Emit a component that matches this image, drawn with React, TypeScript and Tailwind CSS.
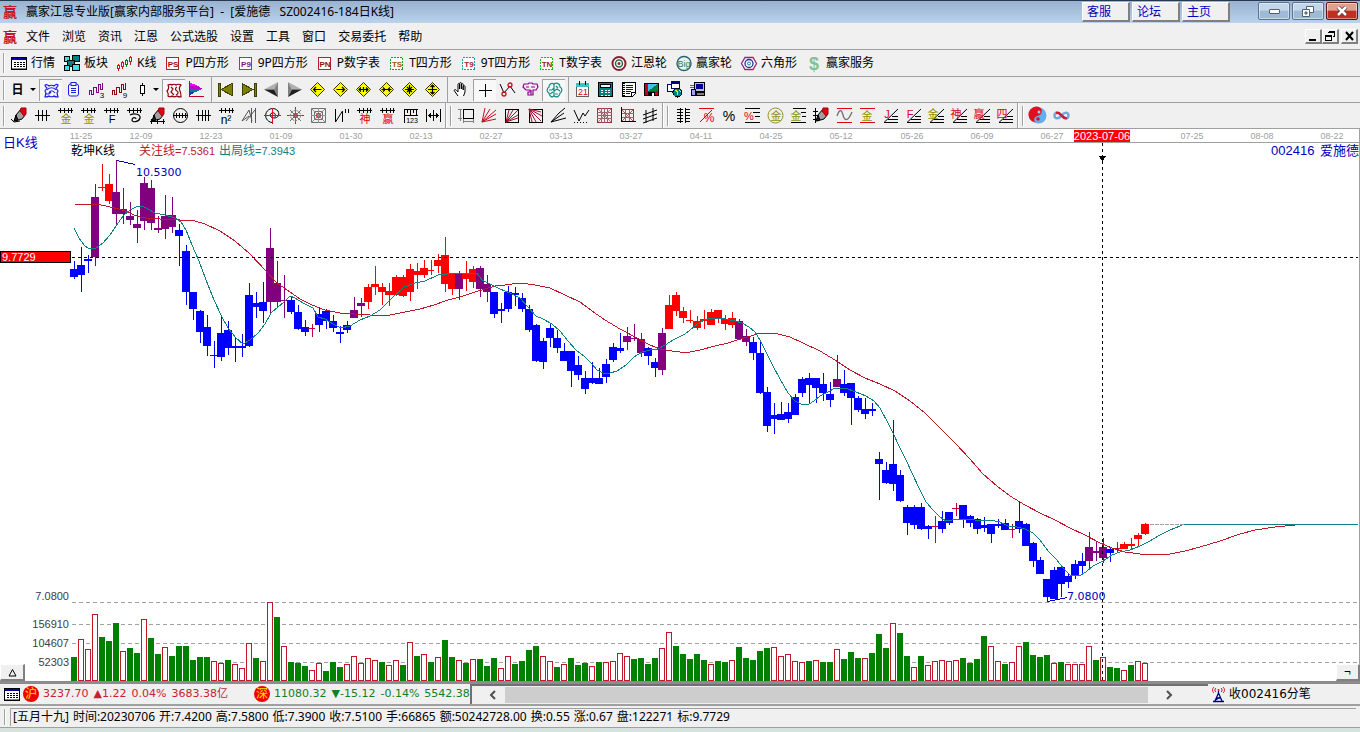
import type { ReactNode } from "react";
import clsx from "clsx";

type Candle = [color: string, high: number, top: number, bottom: number, low: number];

const candles: Candle[] = [
  ["b", 261, 269, 277, 279], ["b", 247, 265, 275, 292], ["b", 255, 259, 261, 273], ["p", 184, 197, 257, 266],
  ["r", 164, 187, 188, 191], ["r", 174, 184, 201, 204], ["p", 160, 192, 214, 224], ["p", 188, 209, 214, 224],
  ["p", 202, 216, 220, 225], ["p", 210, 224, 228, 243], ["p", 177, 183, 221, 230], ["p", 180, 188, 223, 230],
  ["p", 216, 228, 230, 233], ["p", 195, 216, 229, 239], ["p", 197, 215, 227, 233], ["b", 224, 230, 236, 266],
  ["b", 245, 251, 292, 305], ["b", 292, 292, 309, 320], ["b", 310, 311, 332, 343], ["b", 315, 327, 346, 356],
  ["b", 341, 355, 356, 368], ["b", 315, 333, 357, 361], ["b", 321, 330, 348, 355], ["b", 337, 346, 348, 362],
  ["b", 334, 346, 348, 357], ["b", 283, 295, 346, 347], ["b", 292, 303, 307, 318], ["b", 282, 302, 311, 323],
  ["p", 228, 248, 302, 314], ["p", 261, 283, 302, 307], ["p", 275, 300, 301, 318], ["b", 296, 300, 312, 314],
  ["b", 305, 312, 329, 330], ["b", 320, 327, 332, 336], ["c", 324, 328, 329, 337], ["b", 307, 314, 325, 332],
  ["b", 309, 311, 321, 329], ["b", 315, 321, 328, 332], ["b", 326, 332, 334, 343], ["b", 321, 325, 330, 333],
  ["p", 297, 310, 318, 318], ["p", 298, 303, 306, 317], ["r", 284, 287, 302, 309], ["r", 266, 284, 287, 295],
  ["r", 283, 287, 292, 305], ["r", 283, 291, 295, 306], ["r", 275, 277, 295, 296], ["r", 275, 277, 296, 297],
  ["r", 264, 269, 292, 301], ["r", 263, 271, 275, 289], ["r", 260, 268, 275, 278], ["r", 260, 270, 271, 275],
  ["r", 254, 260, 266, 273], ["r", 237, 255, 284, 292], ["r", 273, 273, 289, 295], ["p", 271, 273, 289, 300],
  ["r", 261, 274, 279, 291], ["r", 266, 269, 282, 288], ["p", 266, 268, 289, 297], ["p", 275, 284, 292, 302],
  ["b", 292, 292, 314, 318], ["b", 303, 309, 311, 323], ["b", 286, 292, 309, 312], ["b", 287, 293, 295, 306],
  ["b", 293, 298, 309, 312], ["b", 305, 309, 330, 332], ["b", 324, 325, 361, 362], ["b", 338, 341, 362, 369],
  ["b", 324, 328, 338, 347], ["b", 330, 338, 348, 353], ["b", 343, 351, 361, 361], ["b", 351, 351, 371, 387],
  ["b", 356, 365, 375, 380], ["b", 371, 378, 389, 394], ["b", 362, 378, 383, 384], ["b", 368, 378, 384, 384],
  ["b", 359, 364, 377, 383], ["b", 343, 347, 360, 362], ["b", 333, 348, 351, 353], ["p", 327, 336, 342, 350],
  ["p", 324, 338, 339, 341], ["p", 333, 339, 353, 357], ["b", 347, 348, 356, 365], ["b", 358, 362, 368, 377],
  ["p", 328, 333, 370, 375], ["r", 295, 305, 329, 329], ["r", 292, 295, 311, 316], ["r", 307, 311, 318, 323],
  ["r", 310, 320, 321, 323], ["r", 316, 321, 328, 330], ["r", 310, 319, 321, 329], ["r", 309, 312, 325, 325],
  ["r", 310, 310, 318, 323], ["r", 315, 319, 324, 330], ["r", 312, 318, 325, 328], ["p", 319, 321, 339, 340],
  ["p", 329, 336, 342, 346], ["b", 337, 342, 353, 360], ["b", 342, 353, 393, 394], ["b", 387, 392, 426, 432],
  ["b", 403, 415, 419, 434], ["b", 402, 414, 420, 420], ["b", 403, 412, 419, 423], ["b", 394, 397, 415, 415],
  ["b", 377, 379, 393, 397], ["b", 373, 378, 385, 404], ["b", 378, 378, 388, 403], ["b", 373, 384, 393, 401],
  ["b", 382, 394, 400, 407], ["p", 355, 379, 387, 387], ["b", 370, 384, 393, 396], ["b", 383, 383, 398, 425],
  ["b", 396, 398, 410, 412], ["b", 398, 409, 414, 419], ["b", 403, 409, 411, 416], ["b", 452, 459, 464, 500],
  ["b", 462, 470, 483, 484], ["b", 420, 464, 484, 491], ["b", 470, 475, 501, 502], ["b", 505, 507, 523, 535],
  ["b", 505, 507, 525, 529], ["b", 503, 507, 529, 530], ["b", 525, 526, 529, 539], ["c", 516, 526, 527, 543],
  ["b", 511, 521, 529, 533], ["b", 512, 512, 523, 525], ["c", 503, 508, 509, 516], ["b", 505, 505, 519, 528],
  ["b", 515, 516, 523, 527], ["b", 518, 519, 529, 534], ["b", 517, 525, 528, 532], ["b", 524, 524, 534, 543],
  ["b", 519, 524, 526, 528], ["b", 519, 523, 530, 530], ["c", 524, 529, 530, 538], ["b", 502, 521, 529, 533],
  ["b", 523, 524, 546, 546], ["b", 542, 543, 561, 567], ["b", 557, 560, 574, 574], ["b", 579, 579, 597, 602],
  ["b", 567, 570, 599, 599], ["b", 566, 567, 584, 597], ["b", 574, 576, 582, 588], ["b", 560, 564, 576, 579],
  ["b", 553, 561, 566, 574], ["p", 532, 547, 561, 569], ["p", 542, 551, 553, 561], ["p", 538, 547, 558, 563],
  ["b", 548, 549, 553, 562], ["c", 542, 548, 549, 553], ["r", 542, 544, 549, 549], ["r", 538, 544, 546, 549],
  ["r", 533, 535, 539, 547], ["r", 523, 524, 534, 535],
];

const candleFill: Record<string, string> = { b: "#0000ff", r: "#ff0000", p: "#800080", c: "#c00040" };

const volumes =
  "g657 r639 r649 r614 g637 g641 g623 r651 g648 g653 r619 g638 g654 r647 g656 g646 g646 g660 g657 g657 r661 r663 g660 r664 r668 r643 g658 r661 r602 g617 r646 g662 g663 g666 r670 r663 g671 g662 g667 r664 r656 r663 r658 r660 g662 r665 r660 g665 r642 g656 r654 g662 r657 g640 g657 r660 g663 r659 g659 g666 g658 r668 r656 g664 g661 g650 g646 r656 r661 g667 r664 g658 g665 g663 r666 g662 r662 r661 r653 r656 g659 g658 g664 g658 r648 r632 g646 g654 g659 g654 g660 r664 g661 g662 r660 g647 g658 g660 g651 g648 r647 r656 r654 r661 r662 g661 r660 g662 g662 r649 g659 g652 g658 r658 g653 g634 g648 r623 g633 g656 r667 g656 r665 r661 r660 r661 r660 g658 g663 g659 g636 r646 r661 g664 r662 r646 g642 g655 g657 g655 r663 g662 r664 r664 r664 r646 g660 r657 g667 g668 r670 g665 r661 r663".split(" ");

const slowLine =
  "75,205 78,204 97,204 110,207 119,209 128,212 134,215 140,217 146,218 160,219 180,220 195,221 205,224 220,231 235,241 250,254 266,271 277,283 290,292 300,299 312,305 325,310 340,313 355,314 370,315 390,315 405,312 420,309 434,305 448,300 460,297 475,292 485,289 495,286 505,285 520,283 535,285 550,288 565,295 580,302 592,311 605,320 620,329 635,337 650,345 660,349 672,351 680,352 690,352 700,350 715,346 728,343 737,340 748,337 757,334 767,333 778,334 790,337 803,343 820,351 835,360 850,370 865,378 880,384 895,391 910,401 925,413 940,428 955,443 970,459 983,474 997,486 1010,496 1025,505 1040,513 1055,520 1070,528 1085,535 1100,543 1112,548 1125,552 1140,554 1155,555 1170,554 1185,551 1200,547 1220,541 1240,534 1255,530 1275,527 1295,525 1310,524 1358,524";

const fastLine =
  "74,228 79,238 84,245 89,249 96,248 103,243 110,235 116,226 123,216 130,210 136,207 142,206 148,209 155,213 165,215 175,218 181,222 186,230 192,245 199,261 206,280 214,300 222,317 228,328 236,338 243,344 250,340 258,333 265,324 271,313 278,307 284,302 290,296 295,298 303,303 313,308 318,317 325,319 333,324 341,328 350,326 360,320 370,316 380,310 392,298 404,287 415,283 425,281 438,275 447,274 453,273 477,273 482,280 490,284 500,289 510,293 520,298 528,307 536,316 543,319 552,324 560,331 568,341 576,350 585,357 592,364 597,370 603,373 610,373 617,371 626,365 634,357 642,352 650,350 658,349 665,345 675,339 685,334 695,326 704,320 712,318 725,319 735,321 742,323 749,327 755,332 760,340 766,352 773,366 780,379 788,393 795,401 803,405 809,404 814,401 820,396 828,392 835,388 845,388 856,392 866,396 874,401 880,408 888,423 893,433 900,448 906,460 912,473 920,490 926,502 933,510 940,517 946,521 952,520 960,519 975,520 990,520 1000,522 1008,526 1017,527 1025,529 1033,533 1040,540 1048,551 1056,559 1064,569 1070,575 1079,576 1086,572 1093,566 1103,561 1112,555 1120,552 1130,550 1140,546 1150,541 1160,535 1170,530 1180,526 1184,524 1358,524";

const dates: [number, string][] = [
  [81, "11-25"], [141, "12-09"], [211, "12-23"], [281, "01-09"], [351, "01-30"], [421, "02-13"],
  [491, "02-27"], [561, "03-13"], [631, "03-27"], [701, "04-11"], [771, "04-25"], [841, "05-12"],
  [912, "05-26"], [982, "06-09"], [1052, "06-27"], [1192, "07-25"], [1262, "08-08"], [1332, "08-22"],
];

const menus = ["文件", "浏览", "资讯", "江恩", "公式选股", "设置", "工具", "窗口", "交易委托", "帮助"];

const quote = [
  "[五月十九]", "时间:20230706", "开:7.4200", "高:7.5800", "低:7.3900", "收:7.5100",
  "手:66865", "额:50242728.00", "换:0.55", "涨:0.67", "盘:122271", "标:9.7729",
];

/* ---------- icons ---------- */

function Ico({ children, smooth }: { children: ReactNode; smooth?: boolean }) {
  return (
    <svg
      viewBox="0 0 17 17"
      className="w-[17px] h-[17px] shrink-0 overflow-visible"
      fill="none"
      stroke="#000"
      shapeRendering={smooth ? "auto" : "crispEdges"}
      aria-hidden="true"
    >
      {children}
    </svg>
  );
}

function Glyph({ x, y, size, color, children, bold }: { x: number; y: number; size: number; color: string; children: string; bold?: boolean }) {
  return (
    <text
      x={x}
      y={y}
      fontSize={size}
      fill={color}
      stroke="none"
      textAnchor="middle"
      fontWeight={bold ? 700 : 400}
      fontFamily="'Liberation Sans','Noto Sans CJK SC',sans-serif"
    >
      {children}
    </text>
  );
}

function TableIcon() {
  return (
    <Ico>
      <rect x="0.5" y="2.5" width="15" height="12" fill="#fff" />
      <rect x="1" y="3" width="14" height="2" fill="#0000a0" stroke="none" />
      <path d="M3 7.5h2M6 7.5h2M9 7.5h2M12 7.5h2M3 9.5h2M6 9.5h2M9 9.5h2M12 9.5h2M3 11.5h2M6 11.5h2M9 11.5h2M12 11.5h2" />
      <path d="M1 13.5h14" stroke="#888" />
    </Ico>
  );
}

function BlocksIcon() {
  return (
    <Ico>
      <rect x="0.5" y="1.5" width="5" height="5" fill="#40e0e0" />
      <rect x="8.5" y="0.5" width="7" height="6" fill="#008080" />
      <rect x="3.5" y="5.5" width="7" height="6" fill="#008080" />
      <rect x="0.5" y="10.5" width="5" height="5" fill="#40e0e0" />
      <rect x="8.5" y="9.5" width="7" height="6" fill="#40e0e0" />
    </Ico>
  );
}

function CandlesIcon() {
  return (
    <Ico>
      <path d="M1.5 9v7M5.5 6v8" stroke="#d01818" />
      <path d="M9.5 4v8" stroke="#008000" />
      <path d="M13.5 1v9" stroke="#d01818" />
      <rect x="0.5" y="10.5" width="2" height="3" fill="#fff" stroke="#d01818" />
      <rect x="4.5" y="7.5" width="2" height="4" fill="#fff" stroke="#d01818" />
      <rect x="8.5" y="5.5" width="2" height="4" fill="#fff" stroke="#008000" />
      <rect x="12.5" y="2.5" width="2" height="4" fill="#fff" stroke="#d01818" />
    </Ico>
  );
}

function TagIcon({ label, frame, ink }: { label: string; frame: string; ink: string }) {
  return (
    <Ico>
      <rect x="1.5" y="2.5" width="12" height="12" fill="#fff" stroke={frame} strokeDasharray={frame === "#b02030" || frame === "#b020c0" ? undefined : "2 1"} />
      <Glyph x={8} y={12} size={8} color={ink} bold>{label}</Glyph>
    </Ico>
  );
}

function WheelIcon() {
  return (
    <Ico smooth>
      <circle cx="8" cy="8.500" r="6.500" stroke="#8c2030" strokeWidth="2" fill="#fff" />
      <circle cx="8" cy="8.500" r="3.500" stroke="#207050" strokeWidth="1.500" />
      <circle cx="8" cy="8.500" r="1.500" fill="#b02030" stroke="none" />
    </Ico>
  );
}

function BigIcon() {
  return (
    <Ico smooth>
      <circle cx="8" cy="8.500" r="7" stroke="#306080" strokeWidth="1.400" fill="#e8f4ee" />
      <Glyph x={8} y={12} size={9} color="#208050">Big</Glyph>
    </Ico>
  );
}

function HexIcon() {
  return (
    <Ico smooth>
      <path d="M4 2.500h8l3.500 6-3.500 6H4L.5 8.500z" stroke="#a02070" strokeWidth="1.300" fill="#fff" />
      <circle cx="8" cy="8.500" r="4" stroke="#2030a0" strokeWidth="1.300" />
      <circle cx="8" cy="8.500" r="1.500" stroke="#208080" />
    </Ico>
  );
}

function DollarIcon() {
  return (
    <Ico smooth>
      <Glyph x={8} y={15} size={18} color="#88c088" bold>$</Glyph>
    </Ico>
  );
}

const quickLinks: { label: string; icon: ReactNode }[] = [
  { label: "行情", icon: <TableIcon /> },
  { label: "板块", icon: <BlocksIcon /> },
  { label: "K线", icon: <CandlesIcon /> },
  { label: "P四方形", icon: <TagIcon label="PS" frame="#b02030" ink="#901020" /> },
  { label: "9P四方形", icon: <TagIcon label="P9" frame="#b020c0" ink="#801090" /> },
  { label: "P数字表", icon: <TagIcon label="PN" frame="#b02030" ink="#901020" /> },
  { label: "T四方形", icon: <TagIcon label="TS" frame="#10a020" ink="#a05010" /> },
  { label: "9T四方形", icon: <TagIcon label="T9" frame="#10a0a0" ink="#a02040" /> },
  { label: "T数字表", icon: <TagIcon label="TN" frame="#10c010" ink="#a02010" /> },
  { label: "江恩轮", icon: <WheelIcon /> },
  { label: "赢家轮", icon: <BigIcon /> },
  { label: "六角形", icon: <HexIcon /> },
  { label: "赢家服务", icon: <DollarIcon /> },
];

function Diamond({ d }: { d: string }) {
  return (
    <Ico smooth>
      <path d="M8.500 1.500l7 7-7 7-7-7z" fill="#ffff00" stroke="#303000" strokeWidth="1" />
      <path d={d} strokeWidth="1.200" />
    </Ico>
  );
}

function Wave({ color, n }: { color: string; n: string }) {
  return (
    <Ico>
      <path d="M1.500 14V9.500h2V13.500h2V6.500h3v5h2V3.500h2v5h2V1.500" stroke={color} />
      <Glyph x={14} y={17} size={8} color="#000">{n}</Glyph>
    </Ico>
  );
}

const viewIcons: { name: string; on?: boolean; icon: ReactNode }[] = [
  {
    name: "形态",
    on: true,
    icon: (
      <Ico smooth>
        <path d="M2 3c2-1 3 0 4 1 1-1 4-1 5 0 1-1 3-2 4-1 0 2-1 2-2 3l2 3-1 2 1 4c-2 0-3 0-4-1-1 1-4 1-5 0-1 1-3 1-4 1l1-4-1-2 2-3c-1-1-2-1-2-3z" stroke="#2020e0" strokeWidth="1.200" />
        <path d="M4 8c2-3 7-3 9 0M6 11c1-3 4-3 6 0M2 12h4l2-2" stroke="#2020e0" strokeWidth="1.200" />
      </Ico>
    ),
  },
  {
    name: "列表",
    icon: (
      <Ico smooth>
        <rect x="3.500" y="3" width="10" height="12" rx="2" stroke="#2020e0" />
        <rect x="6" y="1.500" width="5" height="3" fill="#f0f0f0" stroke="#2020e0" />
        <path d="M6 7.500h5M6 9.500h5M6 11.500h5" stroke="#2020e0" />
      </Ico>
    ),
  },
  { name: "3日线", icon: <Wave color="#800080" n="3" /> },
  { name: "9日线", icon: <Wave color="#900010" n="9" /> },
];

const shapeIcons: { name: string; on?: boolean; icon: ReactNode }[] = [
  {
    name: "乾坤",
    on: true,
    icon: (
      <Ico smooth>
        <path d="M2 3c2-1 3-1 4 0 1-1 3-1 4 0 1-1 4-1 5 0-2 2-2 4-1 6s1 4 1 6c-2 0-3 0-4-1-2 1-4 1-5 0-1 1-3 1-4 0 1-2 0-3-1-5 2-2 2-4 1-6z" stroke="#900010" strokeWidth="1.200" />
        <path d="M5 5l2 2-2 3 3 3M11 5c-2 1-2 3 0 4s1 3-1 4" stroke="#900010" strokeWidth="1.200" />
      </Ico>
    ),
  },
  {
    name: "筹码",
    icon: (
      <Ico>
        <path d="M1 1l9 4H1z" fill="#ff00ff" stroke="none" />
        <path d="M1 5h9l5 3H1z" fill="#c000d0" stroke="none" />
        <path d="M1 8h13l-6 3H1z" fill="#008080" stroke="none" />
        <path d="M1 11h6l-6 4z" fill="#0040c0" stroke="none" />
        <path d="M1.500 0v15.500H16" stroke="#c00020" />
      </Ico>
    ),
  },
];

const moveIcons: { name: string; icon: ReactNode }[] = [
  { name: "首个", icon: <Ico><path d="M1 2h2v13H1z" fill="#808000" stroke="#404000" /><path d="M15 2.500v12l-11-6z" fill="#808000" stroke="#404000" /></Ico> },
  { name: "末个", icon: <Ico><path d="M14 2h2v13h-2z" fill="#808000" stroke="#404000" /><path d="M2 2.500v12l11-6z" fill="#808000" stroke="#404000" /></Ico> },
  { name: "前一", icon: <Ico smooth><path d="M1 8.500L15 1l-4 7.500z" fill="#b0b0b0" stroke="none" /><path d="M15 1v15l-4-7.500z" fill="#808080" stroke="none" /><path d="M1 8.500h10l4 7.500z" fill="#202020" stroke="none" /></Ico> },
  { name: "后一", icon: <Ico smooth><path d="M16 8.500L2 1l4 7.500z" fill="#b0b0b0" stroke="none" /><path d="M2 1v15l4-7.500z" fill="#808080" stroke="none" /><path d="M16 8.500H6L2 16z" fill="#202020" stroke="none" /></Ico> },
  { name: "左移", icon: <Diamond d="M4.500 8.500h8M7 6L4.500 8.500 7 11" /> },
  { name: "右移", icon: <Diamond d="M4.500 8.500h8M10 6l2.500 2.500L10 11" /> },
  { name: "横放", icon: <Diamond d="M4 8.500h9M6 6.500l-2 2 2 2M11 6.500l2 2-2 2M8.500 6v5" /> },
  { name: "横缩", icon: <Diamond d="M3.500 8.500h10M5 6.500l2 2-2 2M12 6.500l-2 2 2 2" /> },
  { name: "纵缩", icon: <Diamond d="M4 8.500h9M8.500 4v9M6 6l5 5M11 6l-5 5" /> },
  { name: "纵放", icon: <Diamond d="M4 8.500h9M8.500 4v9M6.500 6l2-2 2 2M6.500 11l2 2 2-2" /> },
];

const cursorIcons: { name: string; on?: boolean; icon: ReactNode }[] = [
  { name: "拖动", icon: <Ico smooth><path d="M5 15l-3.500-5c-.8-1.500 1-2 2-.5L5 11V3.500c0-1.300 1.600-1.300 1.600 0V8 2.500c0-1.300 1.800-1.300 1.800 0V8 3.500c0-1.300 1.800-1.300 1.800 0V9 5.500c0-1.200 1.800-1.200 1.800 0V11l-1.500 4" fill="#fff" /></Ico> },
  { name: "十字线", on: true, icon: <Ico><path d="M8.500 2v13M2 8.500h13" /></Ico> },
  {
    name: "标记",
    icon: (
      <Ico smooth>
        <path d="M1 3l4 9 6-7 5 7" />
        <circle cx="11" cy="4" r="2" stroke="#d01020" strokeWidth="1.300" />
        <circle cx="5" cy="13" r="2" stroke="#d01020" strokeWidth="1.300" />
      </Ico>
    ),
  },
  { name: "树形", icon: <Ico smooth><path d="M2 3h4l1-1h3l1 1h4l1 3-2 3h-3v5H6v-3h2V9H4L1 6z" stroke="#900090" strokeWidth="1.200" /><path d="M4 6h3M9 6h4M9 9v5" stroke="#900090" strokeWidth="1.200" /></Ico> },
  { name: "智能", on: true, icon: <Ico smooth><path d="M8 2C5 0 3 3 3 5c-3 2-2 5 0 6 0 3 3 5 5 3 3 2 6 0 6-3 3-2 2-5 0-6 0-3-3-5-6-3z" stroke="#109080" strokeWidth="1.200" /><path d="M8 2v12M3 8h3l2-2M8 9l3-2 3 2M4 12l3-2M10 4l2 2M9 12h3" stroke="#109080" strokeWidth="1.200" /></Ico> },
];

const toolIcons: { name: string; icon: ReactNode }[] = [
  { name: "日历", icon: <Ico><rect x="2.500" y="2.500" width="12" height="13" fill="#fff" stroke="#606060" /><rect x="2" y="2" width="13" height="4" fill="#40c0c0" stroke="none" /><path d="M5.500 0v4M11.500 0v4" /><Glyph x={9} y={14} size={9} color="#e00000">21</Glyph></Ico> },
  { name: "计算器", icon: <Ico><rect x="1.500" y="1.500" width="14" height="14" fill="#008080" /><rect x="3.500" y="3.500" width="10" height="3" fill="#e0ffff" /><path d="M4 9h2M7.500 9h2M11 9h2M4 11.500h2M7.500 11.500h2M11 11.500h2M4 14h2M7.500 14h2M11 14h2" stroke="#fff" /></Ico> },
  { name: "记事本", icon: <Ico><path d="M2.500 1.500h13v11l-3 3h-10z" fill="#fff" /><path d="M4 2v13" strokeDasharray="1 1" strokeWidth="2" /><path d="M6 4.500h7M6 6.500h7M6 8.500h7M6 10.500h5M6 12.500h4" stroke="#0000c0" /><path d="M11.500 15v-3.500H15" /></Ico> },
  { name: "保存", icon: <Ico><rect x="1.500" y="2.500" width="14" height="12" fill="#c00020" /><rect x="5" y="3" width="10" height="7" fill="#40c0f0" stroke="none" /><path d="M5 10l10-7v7z" fill="#008040" stroke="none" /><rect x="5" y="11" width="7" height="4" fill="#000" stroke="none" /><rect x="9" y="12" width="2" height="3" fill="#fff" stroke="none" /></Ico> },
  { name: "网络", icon: <Ico><rect x="1.500" y="3.500" width="7" height="7" fill="#fff" stroke="#000080" /><rect x="5.500" y="0.500" width="8" height="7" fill="#fff" stroke="#000080" /><path d="M5 2h9" stroke="#000080" strokeWidth="2" /><circle cx="11.500" cy="11.500" r="4.500" fill="#008080" /><path d="M9 9l3 2-1 3M13 9l2 2" stroke="#ffe000" /></Ico> },
  { name: "打印", icon: <Ico><rect x="5.500" y="1.500" width="10" height="9" fill="#c0c0c0" /><rect x="7" y="3" width="7" height="5" fill="#0000a0" stroke="none" /><rect x="2.500" y="8.500" width="4" height="6" fill="#a0a0ff" /><rect x="7.500" y="11.500" width="8" height="3" fill="#808080" /><path d="M1 4.500h4M1 6.500h4" stroke="#606060" /></Ico> },
];

const comb = "M1 3.500h15M3.500 1v5M7.500 1v5M11.500 1v5M14.500 1v5";

function CombWith({ label, color }: { label: string; color: string }) {
  return (
    <Ico>
      <path d={comb} />
      <Glyph x={9} y={16} size={11} color={color}>{label}</Glyph>
    </Ico>
  );
}

function FanWith({ label, color }: { label: string; color: string }) {
  return (
    <Ico>
      <path d="M2 15.500h14M6 12.500h10M10 9.500h6" />
      <path d="M2 15.500L16 2" shapeRendering="auto" />
      <Glyph x={5} y={11} size={11} color={color}>{label}</Glyph>
    </Ico>
  );
}

const pen = (
  <g>
    <path d="M5 8l5-6 5 5-4 5-7 2z" fill="#a0a0a0" />
    <path d="M10 1h5v6l-2 2-4-5z" fill="#e00010" stroke="#a00010" />
    <path d="M5 8l-2 6 4-1z" fill="#202020" />
  </g>
);

const drawA: [string, ReactNode][] = [
  ["画笔", <Ico smooth>{pen}<path d="M0 12l3 3 6-1" /></Ico>],
  ["等距", <Ico><path d="M1 8.500h15M4.500 3v11M8.500 3v11M12.500 3v11" /></Ico>],
  ["黄金上", <CombWith label="金" color="#909000" />],
  ["黄金下", <CombWith label="金" color="#909000" />],
  ["斐波", <CombWith label="F" color="#000" />],
  ["螺旋", <Ico smooth><path d={comb} shapeRendering="crispEdges" /><path d="M4 8c4-2 11-1 10 3s-8 5-8 2 4-3 4-1" strokeWidth="1.200" /></Ico>],
  ["标尺笔", <Ico smooth>{pen}<path d="M1 14.500h15M2.500 12v5M8.500 12v5M14.500 12v5" shapeRendering="crispEdges" /></Ico>],
  ["圆周", <Ico smooth><circle cx="8.500" cy="8.500" r="7" /><path d="M1 8.500h15M4.500 6v5M7.500 6v5M10.500 6v5M13.500 6v5" shapeRendering="crispEdges" /></Ico>],
  ["密距", <Ico><path d="M1 8.500h15M3.500 3v11M7.500 3v11M10.500 3v11M13.500 3v11" /></Ico>],
  ["平方", <Ico><path d={comb} /><Glyph x={8} y={17} size={12} color="#000">n²</Glyph></Ico>],
  ["三角", <Ico smooth><path d="M1 14L8 3l3 11M1 14l7-5M10.500 1v15M14.500 1v15M5 14L14 3" stroke="#555" /></Ico>],
  ["定位", <Ico smooth><path d="M14 4A7 7 0 108 15.500M14 4c2 4 0 7-4 7s-5-4-2-5 4 2 3 4" /><path d="M0 8.500h17M8.500 1v16" stroke="#e01020" /></Ico>],
  ["八卦", <Ico smooth><path d="M8.500 1v15M1 8.500h15M3 3l11 11M14 3L3 14" stroke="#707070" /><circle cx="8.500" cy="8.500" r="5" stroke="#707070" strokeDasharray="2 1" /><circle cx="8.500" cy="8.500" r="2" stroke="#c02030" /><path d="M8.500 0v2M8.500 15v2M0 8.500h2M15 8.500h2" stroke="#c02030" /></Ico>],
  ["方阵", <Ico smooth><rect x="1.500" y="1.500" width="14" height="14" stroke="#707070" /><rect x="4.500" y="4.500" width="8" height="8" stroke="#707070" /><path d="M1 1l15 15M16 1L1 16M8.500 1v15M1 8.500h15" stroke="#909090" /><circle cx="8.500" cy="8.500" r="2" stroke="#c02030" /></Ico>],
  ["波动", <Ico smooth><path d="M2.500 2v13L9.500 4v11" /><path d="M12.500 2v4M15.500 2v4" /></Ico>],
  ["神", <CombWith label="神" color="#e00010" />],
  ["赢", <CombWith label="赢" color="#e00010" />],
  ["刻度", <Ico><path d="M2.500 16V2.500h13M2 8.500h14M5.500 3v3M8.500 3v5M11.500 3v3M14.500 3v5" /><Glyph x={10} y={16} size={7} color="#000">123</Glyph></Ico>],
  ["量距", <Ico><path d="M1.500 2v13M15.500 2v13M8.500 3v11M3 8.500h11M5.500 6v5M11.500 6v5M4.500 7v3M12.500 7v3" /></Ico>],
];

const drawB: [string, ReactNode][] = [
  ["方框", <Ico><rect x="5.500" y="2.500" width="10" height="9" /><path d="M2.500 2v12M0 2.500h4M0 11.500h4M5.500 12v4M15.500 12v4M6 14.500h9" stroke="#808080" /></Ico>],
  ["扇形", <Ico smooth><path d="M1 15L4 1M1 15L9 2M1 15L15 3M1 15l14-8M1 15l14-3" stroke="#c01020" /></Ico>],
  ["扇框", <Ico smooth><rect x="1.500" y="2.500" width="13" height="13" /><path d="M2 15L5 3M2 15L9 3M2 15L14 3M2 15l12-7M2 15l12-4" stroke="#a01030" /></Ico>],
  ["反扇", <Ico smooth><rect x="2.500" y="2.500" width="13" height="13" /><path d="M2 2l12 3M2 2l13 7M2 2l12 12M2 2l7 13M2 2l3 13" stroke="#a01030" /></Ico>],
  ["射线", <Ico smooth><path d="M1 15L9 6M1 15l13-9M1 15l15-4M9 6l6-5" /></Ico>],
  ["折线", <Ico smooth><path d="M1 3l5 11 4-8 2 3 4-6" /><path d="M1 15.500h14" strokeDasharray="1 2" /></Ico>],
  ["网格", <Ico><rect x="1.500" y="1.500" width="14" height="14" stroke="#a03040" /><path d="M1 5.500h15M1 8.500h15M1 11.500h15M5.500 1v15M8.500 1v15M11.500 1v15" stroke="#a06068" /><path d="M2 2l13 13M15 2L2 15" stroke="#b08088" /></Ico>],
  ["网格箭头", <Ico><rect x="2.500" y="2.500" width="12" height="12" stroke="#a03040" /><path d="M2 6.500h13M2 10.500h13M6.500 2v13M10.500 2v13M3 3l11 11M14 3L3 14" stroke="#a06068" /><path d="M2.500 0v14.500H17" /></Ico>],
  ["平行", <Ico smooth><path d="M1 8l14-5M1 12l14-5M1 16l14-5M4 3v13M11 1v13" /></Ico>],
];

const drawC: [string, ReactNode][] = [
  ["价尺", <Ico><path d="M5.500 1v15M10.500 1v15M2 2.500h6M2 5.500h6M2 8.500h6M2 11.500h6M2 14.500h6M10 2.500h5M10 5.500h5M10 8.500h5M10 11.500h5M10 14.500h5" /></Ico>],
  ["百分顶", <Ico><path d="M1 1.500h15" stroke="#e00010" /><path d="M2 15L14 3" shapeRendering="auto" stroke="#802020" /><Glyph x={11} y={15} size={12} color="#e00010">%</Glyph></Ico>],
  ["百分比", <Ico smooth><Glyph x={8} y={14} size={14} color="#000">%</Glyph></Ico>],
  ["百分线", <Ico><path d="M1 1.500h15M9 5.500h7M11 9.500h5M1 15.500h15" /><Glyph x={5} y={13} size={11} color="#e00010">%</Glyph></Ico>],
  ["金圆", <Ico smooth><circle cx="8.500" cy="8.500" r="7.500" stroke="#909030" /><Glyph x={9} y={13} size={11} color="#909000">金</Glyph></Ico>],
  ["金线", <Ico><path d="M3 1.500h13M11 5.500h5M12 9.500h4M1 15.500h15" /><Glyph x={6} y={13} size={11} color="#909000">金</Glyph></Ico>],
  ["笔尺", <Ico smooth><path d="M2.500 1v15M0 4.500h5M0 8.500h5M0 12.500h5" />{pen}</Ico>],
  ["正弦", <Ico smooth><path d="M1 1.500h15M1 15.500h15" stroke="#e00010" /><path d="M1 9c3-9 5-5 6-1s4 9 9-3" stroke="#707070" strokeWidth="1.300" /></Ico>],
  ["金框", <Ico><path d="M1 1.500h15M1 15.500h15" stroke="#e00010" /><Glyph x={8} y={13} size={11} color="#909000">金</Glyph></Ico>],
  ["J扇", <FanWith label="J" color="#e00010" />],
  ["F扇", <FanWith label="F" color="#e00010" />],
  ["金扇", <FanWith label="金" color="#909000" />],
  ["神扇", <FanWith label="神" color="#e00010" />],
  ["赢扇", <FanWith label="赢" color="#e00010" />],
  ["四扇", <FanWith label="四" color="#e00010" />],
];

const drawD: [string, ReactNode][] = [
  ["太极", <Ico smooth><circle cx="8.500" cy="8.500" r="8" fill="#60b0f0" stroke="none" /><path d="M10 .5a8 8 0 10-5 15c-2-4 0-6 3.500-7S13 3 10 .5z" fill="#e01020" stroke="none" /><circle cx="9" cy="5" r="1.500" fill="#90d0ff" stroke="none" /><circle cx="8" cy="12" r="1.800" fill="#e01020" stroke="none" /></Ico>],
  ["无限", <Ico smooth><path d="M8.500 8.500C6 5 1.500 4.500 1.500 8.500s4.500 3.500 7 0" stroke="#70a8e0" strokeWidth="2.500" /><path d="M8.500 8.500c2.500 3.500 7 4 7 0s-4.500-3.500-7 0" stroke="#70a8e0" strokeWidth="2.500" /><path d="M3 6c3-1 4 1 5.500 2.500S12 12 14 11" stroke="#d01830" strokeWidth="2.500" /></Ico>],
];

/* ---------- toolbar pieces ---------- */

function ToolButton({ name, on, children }: { name: string; on?: boolean; children: ReactNode }) {
  return (
    <button
      type="button"
      aria-label={name}
      className={clsx(
        "w-[23px] h-[22px] shrink-0 flex items-center justify-center",
        on && "bg-[#f8f8f8] border-t border-l border-[#a0a0a0]"
      )}
    >
      {children}
    </button>
  );
}

function Separator() {
  return <span className="w-1.5 h-full shrink-0 flex justify-center"><span className="w-px h-full bg-[#a0a0a0]" /></span>;
}

function Grip() {
  return <span className="w-0.5 h-5 mx-[3px] shrink-0 border-l border-[#a0a0a0] bg-white" />;
}

function BandBreak() {
  return (
    <span className="w-2.5 h-full shrink-0 flex items-center">
      <span className="w-0.5 h-full border-l border-[#a0a0a0] bg-white" />
      <Grip />
    </span>
  );
}

function Chevron() {
  return <span className="border-x-[3px] border-x-transparent border-t-[3px] border-t-black" />;
}

function Toolbars() {
  return (
    <>
      <div className="h-[27px] border-b border-[#a0a0a0] flex items-center">
        <Grip />
        <div className="flex items-center gap-2 pl-[3px]">
          {quickLinks.map((q) => (
            <button key={q.label} type="button" className="flex items-center gap-[3px] pr-px whitespace-nowrap">
              {q.icon}
              {q.label}
            </button>
          ))}
        </div>
      </div>

      <div className="h-[26px] border-b border-[#a0a0a0] flex items-center">
        <Grip />
        <button type="button" className="w-[31px] flex items-center justify-center gap-1.5 font-bold">
          日
          <Chevron />
        </button>
        {viewIcons.map((v) => (
          <ToolButton key={v.name} name={v.name} on={v.on}>{v.icon}</ToolButton>
        ))}
        <button type="button" aria-label="K线样式" className="w-[31px] flex items-center justify-center gap-0.5">
          <Ico><path d="M8.500 2v13" /><rect x="6.500" y="4.500" width="4" height="8" fill="#fff" /></Ico>
          <Chevron />
        </button>
        {shapeIcons.map((v) => (
          <ToolButton key={v.name} name={v.name} on={v.on}>{v.icon}</ToolButton>
        ))}
        <Separator />
        {moveIcons.map((v) => (
          <ToolButton key={v.name} name={v.name}>{v.icon}</ToolButton>
        ))}
        <Separator />
        {cursorIcons.map((v) => (
          <ToolButton key={v.name} name={v.name} on={v.on}>{v.icon}</ToolButton>
        ))}
        <Separator />
        {toolIcons.map((v) => (
          <ToolButton key={v.name} name={v.name}>{v.icon}</ToolButton>
        ))}
      </div>

      <div className="h-[26px] border-b border-[#a0a0a0] flex items-center">
        <Grip />
        {drawA.map(([name, icon]) => <ToolButton key={name} name={name}>{icon}</ToolButton>)}
        <BandBreak />
        {drawB.map(([name, icon]) => <ToolButton key={name} name={name}>{icon}</ToolButton>)}
        <BandBreak />
        {drawC.map(([name, icon]) => <ToolButton key={name} name={name}>{icon}</ToolButton>)}
        <BandBreak />
        {drawD.map(([name, icon]) => <ToolButton key={name} name={name}>{icon}</ToolButton>)}
      </div>
    </>
  );
}

/* ---------- chart ---------- */

const sans = "'Liberation Sans','Noto Sans CJK SC',sans-serif";
const wide = "'DejaVu Sans','Noto Sans CJK SC',sans-serif";

function Chart() {
  return (
    <svg viewBox="0 129 1360 552" className="block w-full h-auto bg-white" shapeRendering="crispEdges" role="img" aria-label="爱施德 日K线">
      {/* date axis */}
      <g fontFamily={sans} fontSize="9" fill="#a0a0a0" textAnchor="middle">
        {dates.map(([x, d]) => <text key={d} x={x} y="139">{d}</text>)}
      </g>
      <rect x="71" y="142" width="1289" height="1" fill="#a0a0a0" />
      <rect x="1359" y="129" width="1" height="552" fill="#a0a0a0" />

      {/* grid and volume scale */}
      <g stroke="#a0a0a0" strokeDasharray="4 3">
        <path d="M72 602.500H1358M72 624.500H1358M72 643.500H1358M72 662.500H1358" />
      </g>
      <g fontFamily={sans} fontSize="11" fill="#404040" textAnchor="end">
        <text x="69" y="600">7.0800</text>
        <text x="69" y="628">156910</text>
        <text x="69" y="647">104607</text>
        <text x="69" y="666">52303</text>
      </g>

      {volumes.map((v, i) => {
        const x = 71 + i * 7;
        const y = Number(v.slice(1));
        return v[0] === "g" ? (
          <rect key={i} x={x} y={y} width="6" height={681 - y} fill="#008000" />
        ) : (
          <rect key={i} x={x + 0.5} y={y + 0.5} width="5" height={680 - y} fill="#fff" stroke="#c01828" />
        );
      })}

      {candles.map(([c, high, top, bottom, low], i) => (
        <g key={i} fill={candleFill[c]}>
          <rect x={74 + i * 7} y={high} width="1" height={Math.max(low - high, 1)} />
          <rect x={70 + i * 7} y={top} width={bottom - top > 1 ? 8 : 7} height={bottom - top} />
        </g>
      ))}

      <polyline points={slowLine} fill="none" stroke="#c01828" />
      <polyline points={fastLine} fill="none" stroke="#108080" />
      <path d="M1150 524.500h34" stroke="#a0a0a0" strokeDasharray="4 1" />

      {/* crosshair */}
      <path d="M72 257.500H1358" stroke="#000" strokeDasharray="3 3" />
      <path d="M1102.500 143V681" stroke="#000" strokeDasharray="3 3" />
      <path d="M1099 156h7l-3 5h-1z" fill="#000" />
      <rect x="1074" y="130" width="56" height="12" fill="#ff0000" />
      <text x="1102" y="140" fontFamily={sans} fontSize="11" fill="#fff" textAnchor="middle">2023-07-06</text>
      <rect x="0.5" y="251.500" width="70" height="11" fill="#ff0000" stroke="#000" />
      <text x="2" y="261" fontFamily={sans} fontSize="11" fill="#fff">9.7729</text>

      {/* extremes */}
      <path d="M117 160.500l18 4M1048 601.500l19-4" stroke="#0000c0" fill="none" />
      <g fontFamily={wide} fontSize="11" fill="#0000c0">
        <text x="136" y="176">10.5300</text>
        <text x="1067" y="600">7.0800</text>
      </g>

      {/* captions */}
      <g fontFamily={sans} fontSize="12">
        <text x="3" y="147" fontSize="13" fill="#0000c0">日K线</text>
        <text x="71" y="155" fill="#000">乾坤K线</text>
        <text x="139" y="155" fill="#c01828">关注线<tspan fontSize="11">=7.5361</tspan></text>
        <text x="219" y="155" fill="#108080">出局线<tspan fontSize="11">=7.3943</tspan></text>
        <text x="1271" y="155" fontSize="13" fill="#0000c0">002416</text>
        <text x="1320" y="155" fontSize="13" fill="#0000c0">爱施德</text>
      </g>
    </svg>
  );
}

/* ---------- window frame ---------- */

function FrameButton({ name, close, children }: { name: string; close?: boolean; children: ReactNode }) {
  return (
    <button
      type="button"
      aria-label={name}
      className={clsx(
        "w-8 h-[18px] rounded-[2px] border flex items-center justify-center shadow-[inset_0_0_0_1px_rgba(255,255,255,0.45)]",
        close
          ? "border-[#5a1a1a] bg-linear-to-b from-[#e0a090] from-45% to-[#c03020] to-50%"
          : "border-[#5b7492] bg-linear-to-b from-[#c4d6ea] from-45% to-[#9fbad6] to-50%"
      )}
    >
      {children}
    </button>
  );
}

const raised = "bg-[#f0f0f0] border-t border-l border-t-white border-l-white border-r-2 border-b-2 border-r-[#808080] border-b-[#808080]";

function TitleBar() {
  return (
    <header className="h-[23px] border-t border-[#283850] bg-linear-to-b from-[#98b2d0] to-[#bad2ec] flex items-center">
      <span className="w-[26px] pl-[3px] text-[14px] leading-5 font-bold text-[#c01828]">赢</span>
      <h1 className="flex-1 whitespace-pre">赢家江恩专业版[赢家内部服务平台]  -  [爱施德   SZ002416-184日K线]</h1>
      <div className="flex gap-0.5 mr-7">
        {["客服", "论坛", "主页"].map((t) => (
          <a key={t} href="#" className={clsx("w-12 h-5 pl-1 leading-[17px] text-[#0000c0]", raised)}>{t}</a>
        ))}
      </div>
      <div className="flex gap-0.5 mr-0.5 pb-0.5">
        <FrameButton name="最小化">
          <span className="w-[11px] h-[5px] bg-white border border-[#506070] rounded-[1px]" />
        </FrameButton>
        <FrameButton name="还原">
          <svg viewBox="0 0 12 11" className="w-3 h-[11px]" fill="#fff" stroke="#506070" aria-hidden="true">
            <path d="M4.500.5h7v6h-7z" />
            <path d="M.5 3.500h7v7h-7zM3 6h2v2H3z" fillRule="evenodd" />
          </svg>
        </FrameButton>
        <FrameButton name="关闭" close>
          <svg viewBox="0 0 12 10" className="w-3 h-2.5" fill="none" aria-hidden="true">
            <path d="M2 1l8 8M10 1L2 9" stroke="#503030" strokeWidth="4" />
            <path d="M2 1l8 8M10 1L2 9" stroke="#fff" strokeWidth="2.500" />
          </svg>
        </FrameButton>
      </div>
    </header>
  );
}

function MenuBar() {
  return (
    <nav className="h-[27px] pt-px border-b border-[#a0a0a0] flex items-center">
      <span className="w-[26px] pl-[3px] text-[14px] leading-5 font-bold text-[#c01828]">赢</span>
      <div className="flex-1 flex gap-3">
        {menus.map((m) => <button key={m} type="button">{m}</button>)}
      </div>
      <div className="flex mr-0.5">
        <button type="button" aria-label="最小化子窗口" className={clsx("w-[17px] h-[15px]", raised)}>
          <svg viewBox="0 0 14 12" className="w-3.5 h-3" aria-hidden="true"><path d="M3 9h7v2H3z" /></svg>
        </button>
        <button type="button" aria-label="还原子窗口" className={clsx("w-[17px] h-[15px] mr-0.5", raised)}>
          <svg viewBox="0 0 14 12" className="w-3.5 h-3" fill="none" stroke="#000" shapeRendering="crispEdges" aria-hidden="true">
            <path d="M5.500 1.500h6v5h-2M5 2.500h7M2.500 5.500h6v5h-6zM2 6.500h7" />
          </svg>
        </button>
        <button type="button" aria-label="关闭子窗口" className={clsx("w-[17px] h-[15px]", raised)}>
          <svg viewBox="0 0 14 12" className="w-3.5 h-3" stroke="#000" strokeWidth="2" aria-hidden="true"><path d="M4 2l7 8M11 2l-7 8" /></svg>
        </button>
      </div>
    </nav>
  );
}

function Badge({ children }: { children: string }) {
  return (
    <span className="w-4 h-4 shrink-0 rounded-full bg-[#f00000] text-[#ffe000] text-[12px] leading-4 text-center">{children}</span>
  );
}

function IndexBar() {
  return (
    <div className="h-[22px] border-b-2 border-[#a0a0a0] flex items-stretch [font-family:'DejaVu_Sans','Noto_Sans_CJK_SC',sans-serif] text-[11px]">
      <div className="w-[470px] shrink-0 pl-1 flex items-center overflow-hidden whitespace-nowrap">
        <TableIcon />
        <span className="w-0.5 shrink-0" />
        <Badge>沪</Badge>
        <div className="w-[215px] shrink-0 pl-1 flex gap-[5px] text-[#c82030]">
          <span>3237.70</span>
          <span>▲1.22</span>
          <span>0.04%</span>
          <span>3683.38亿</span>
        </div>
        <Badge>深</Badge>
        <div className="pl-1 flex gap-[5px] text-[#108020]">
          <span>11080.32</span>
          <span>▼-15.12</span>
          <span>-0.14%</span>
          <span>5542.38</span>
        </div>
      </div>
      <div className="flex-1 border-t-2 border-l-2 border-[#707070] flex items-center">
        <button type="button" aria-label="向左" className="w-[33px] pl-[9px] flex justify-center">
          <svg viewBox="0 0 8 10" className="w-2 h-2.5" fill="none" stroke="#505050" strokeWidth="2" aria-hidden="true"><path d="M6 1L2 5l4 4" /></svg>
        </button>
        <span className="flex-1 h-4 bg-[#cdcdcd]" />
        <button type="button" aria-label="向右" className="w-[60px] pl-[17px]">
          <svg viewBox="0 0 8 10" className="w-2 h-2.5" fill="none" stroke="#505050" strokeWidth="2" aria-hidden="true"><path d="M2 1l4 4-4 4" /></svg>
        </button>
      </div>
      <div className="w-[152px] shrink-0 pl-0.5 flex items-center gap-0.5 text-[12px] whitespace-nowrap">
        <Ico smooth>
          <path d="M8.500 5v4M5 15l3.500-8 3.500 8M3 15.500h11M6 12h5M5.500 14l5-3" stroke="#000080" strokeWidth="1.300" />
          <path d="M6 6c-1.500-1-1.500-3 0-4M11 6c1.500-1 1.500-3 0-4M4 7C2 5 2 3 4 1M13 7c2-2 2-4 0-6" stroke="#d01020" />
          <circle cx="8.500" cy="4" r="1" fill="#d01020" stroke="none" />
        </Ico>
        收002416分笔
      </div>
    </div>
  );
}

export default function App() {
  return (
    <div className="w-full min-h-screen bg-[#d5e2dd] [font-family:'Noto_Sans','Noto_Sans_CJK_SC',sans-serif] text-[12px] leading-4 text-black overflow-hidden">
      <div className="bg-[#f0f0f0]">
        <TitleBar />
        <MenuBar />
        <Toolbars />
        <main className="relative">
          <Chart />
          <button type="button" aria-label="展开" className={clsx("absolute left-0 bottom-0 w-[25px] h-[17px] flex items-center justify-center", raised)}>
            <svg viewBox="0 0 9 9" className="w-[9px] h-[9px]" fill="none" stroke="#000" aria-hidden="true"><path d="M4.500 1.500l3.500 6.500H1z" /></svg>
          </button>
          <button type="button" className={clsx("absolute right-0 bottom-0 w-6 h-[17px] text-[12px] leading-[14px]", raised)}>¬</button>
        </main>
        <div className="h-[3px] bg-[#8c8c8c]" />
        <IndexBar />
        <footer className="h-[22px] py-0.5 px-1 border-b border-[#a0a0a0] flex items-center">
          <span className="w-0.5 h-4 border-l border-[#a0a0a0] bg-white" />
          <div className="flex-1 ml-1 h-[18px] pl-0.5 border-t border-l border-[#a0a0a0] flex gap-1 whitespace-nowrap">
            {quote.map((q) => <span key={q}>{q}</span>)}
          </div>
        </footer>
      </div>
    </div>
  );
}
